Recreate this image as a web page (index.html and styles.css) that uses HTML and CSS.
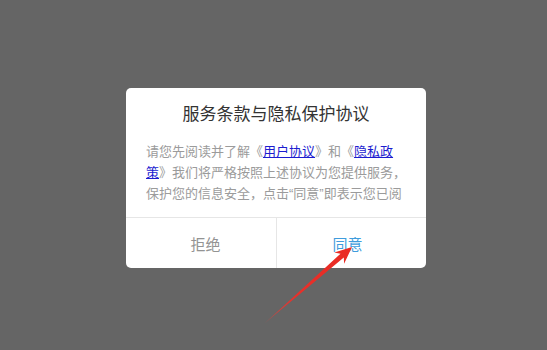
FILE: index.html
```html
<!DOCTYPE html>
<html lang="zh-CN">
<head>
<meta charset="utf-8">
<link rel="stylesheet" href="styles.css">
</head>
<body>
<div class="page">
  <div class="dialog">
    <div class="title">服务条款与隐私保护协议</div>
    <div class="content">
      <p class="text">请您先阅读并了解《<a class="link">用户协议</a>》和《<a class="link">隐私政策</a>》我们将严格按照上述协议为您提供服务，保护您的信息安全，点击“同意”即表示您已阅读并同意全部条款。</p>
    </div>
    <div class="actions">
      <div class="btn btn-reject">拒绝</div>
      <div class="btn btn-agree">同意</div>
    </div>
  </div>
</div>
<svg class="arrow" width="547" height="350" viewBox="0 0 547 350">
  <defs>
    <linearGradient id="ag" x1="265" y1="323" x2="352" y2="247" gradientUnits="userSpaceOnUse">
      <stop offset="0" stop-color="#e8403a" stop-opacity="0.6"/>
      <stop offset="0.35" stop-color="#e8302a"/>
      <stop offset="1" stop-color="#ea2a22"/>
    </linearGradient>
  </defs>
  <polygon fill="url(#ag)" points="265,323 343.8,257.5 344.1,263.8 352,247 334.3,252.6 340.5,253.7"/>
</svg>
</body>
</html>
```
FILE: styles.css
```css
html, body {
  margin: 0;
  padding: 0;
}
body {
  width: 547px;
  height: 350px;
  background: #656565;
  font-family: "Liberation Sans", "Noto Sans CJK SC", sans-serif;
  overflow: hidden;
  position: relative;
}
.page {
  display: flex;
  flex-direction: column;
  align-items: flex-start;
  padding: 88px 0 0 126px;
}
.dialog {
  width: 300px;
  background: #ffffff;
  border-radius: 5px;
  display: flex;
  flex-direction: column;
  overflow: hidden;
}
.title {
  padding-top: 15px;
  height: 24px;
  line-height: 24px;
  font-size: 17px;
  color: #333333;
  text-align: center;
}
.content {
  margin-top: 14px;
  padding: 0 17px 0 20px;
  height: 63px;
  overflow: hidden;
  margin-bottom: 13px;
}
.text {
  margin: 0;
  font-size: 13px;
  line-height: 21px;
  color: #9b9b9b;
}
.link {
  color: #1c1ccf;
  text-decoration: underline;
}
.actions {
  display: flex;
  border-top: 1px solid #e6e6e6;
  height: 50px;
}
.btn {
  flex: 1;
  display: flex;
  align-items: center;
  justify-content: center;
  font-size: 15px;
}
.btn-reject {
  color: #939393;
  border-right: 1px solid #e6e6e6;
  padding-left: 9px;
}
.btn-agree {
  color: #3f9cdd;
  padding-right: 8px;
}
.arrow {
  position: absolute;
  left: 0;
  top: 0;
  pointer-events: none;
}
```
